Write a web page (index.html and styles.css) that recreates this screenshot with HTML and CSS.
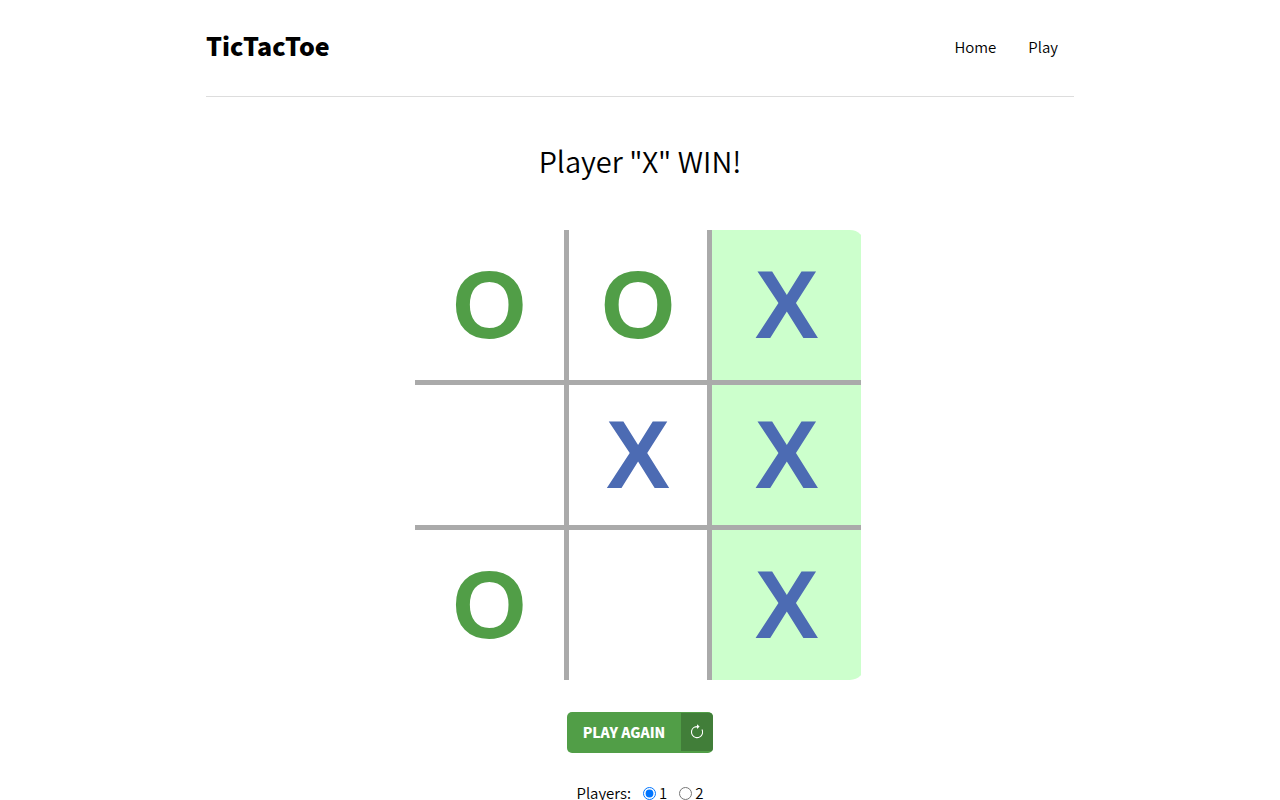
FILE: index.html
```html
<!DOCTYPE html>
<html lang="en">
<head>
<meta charset="utf-8">
<meta name="viewport" content="width=device-width, initial-scale=1">
<title>TicTacToe</title>
<link rel="stylesheet" href="styles.css">
</head>
<body>
<div class="container">
  <header class="header">
    <h1 class="brand">TicTacToe</h1>
    <nav class="nav">
      <a class="nav-link" href="#home">Home</a>
      <a class="nav-link" href="#play">Play</a>
    </nav>
  </header>
  <main class="game">
    <h2 class="status">Player "X" WIN!</h2>
    <div class="board">
      <button class="cell mark-o" type="button">O</button>
      <button class="cell center-col mark-o" type="button">O</button>
      <button class="cell mark-x win" type="button">X</button>
      <button class="cell center-row" type="button" aria-label="Empty"></button>
      <button class="cell center-row center-col mark-x" type="button">X</button>
      <button class="cell center-row mark-x win" type="button">X</button>
      <button class="cell mark-o" type="button">O</button>
      <button class="cell center-col" type="button" aria-label="Empty"></button>
      <button class="cell mark-x win" type="button">X</button>
    </div>
    <button class="again" type="button">
      <span class="again-label">PLAY AGAIN</span>
      <span class="again-icon">
        <svg width="14" height="16" viewBox="0 0 14 16" fill="none" stroke="currentColor" stroke-width="1.1" aria-hidden="true">
          <path d="M3.9 3.4A5.6 5.6 0 1 0 12 5.4M3.9 3.4Q5.2 2.6 7.8 2.6"/>
          <path d="M7 .3 9.6 2.6 7 5Z" fill="currentColor" stroke="none"/>
        </svg>
      </span>
    </button>
    <div class="players" role="radiogroup" aria-labelledby="players-label">
      <span id="players-label">Players:</span>
      <label class="option"><input class="radio" type="radio" name="players" value="1" checked>1</label>
      <label class="option"><input class="radio" type="radio" name="players" value="2">2</label>
    </div>
  </main>
</div>
</body>
</html>
```
FILE: styles.css
```css
* { box-sizing: border-box; }

body {
  margin: 0;
  background: #fff;
  color: #000;
  font-family: "Noto Sans CJK JP", "Noto Sans", sans-serif;
  font-size: 15px;
  font-weight: 350;
  line-height: 24px;
}

.container {
  max-width: 900px;
  margin: 0 auto;
  padding: 0 16px;
}

.header {
  display: flex;
  align-items: center;
  justify-content: space-between;
  height: 97px;
  padding-bottom: 2px;
  border-bottom: 1px solid #ddd;
}

.brand {
  margin: 0;
  padding-bottom: 4px;
  font-size: 25px;
  font-weight: 900;
  line-height: 40px;
}

.nav { display: flex; }

.nav-link {
  padding: 8px 16px;
  color: #000;
  text-decoration: none;
}

.game {
  display: flex;
  flex-direction: column;
  align-items: center;
}

.status {
  margin: 39px 0 46px;
  font-size: 29px;
  font-weight: 350;
  line-height: 48px;
}

.board {
  display: grid;
  grid-template-columns: repeat(3, 1fr);
  grid-auto-rows: 150px;
  width: 100%;
  max-width: 450px;
  padding-right: 4px;
  border-radius: 15px;
  overflow: hidden;
}

.cell {
  padding: 0;
  border: 0 solid #aaa;
  background: transparent;
  font-family: "Liberation Sans", Arial, sans-serif;
  font-size: 96px;
  font-weight: 700;
  line-height: 96px;
}

.center-col { border-left-width: 5px; border-right-width: 5px; }
.center-row { border-top-width: 5px; border-bottom-width: 5px; }
.win { background: #cfc; }
.mark-o { color: #519e47; }
.mark-x { color: #4c6bb3; }

.again {
  display: flex;
  align-items: stretch;
  margin-top: 32px;
  padding: 1px 0 2px;
  border: 0;
  border-radius: 5px;
  overflow: hidden;
  background: #519e47;
  color: #fff;
  font-family: inherit;
  font-size: 14px;
  font-weight: 900;
  line-height: 38px;
}

.again-label { padding: 0 16px; }

.again-icon {
  display: flex;
  align-items: center;
  justify-content: center;
  width: 32px;
  background: #417e39;
}

.players {
  display: flex;
  align-items: center;
  margin-top: 28px;
}

.option {
  display: flex;
  align-items: center;
  gap: 3px;
  margin-left: 12px;
}

.radio { width: 13px; height: 13px; margin: 0; }
```
